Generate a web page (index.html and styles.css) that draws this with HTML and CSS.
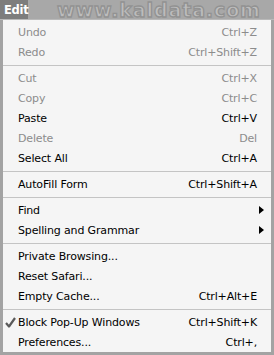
FILE: index.html
```html
<!DOCTYPE html>
<html lang="en">
<head>
    <meta charset="UTF-8">
    <title>Edit Menu</title>
    <link rel="stylesheet" href="styles.css">
</head>
<body>
    <!-- Menu bar -->
    <div class="menubar">
        <span class="tab">Edit</span>
        <span class="watermark">www.kaldata.com</span>
    </div>

    <!-- Dropdown -->
    <div class="menu">
        <div class="item disabled"><span>Undo</span><span>Ctrl+Z</span></div>
        <div class="item disabled"><span>Redo</span><span>Ctrl+Shift+Z</span></div>
        <div class="sep"></div>
        <div class="item disabled"><span>Cut</span><span>Ctrl+X</span></div>
        <div class="item disabled"><span>Copy</span><span>Ctrl+C</span></div>
        <div class="item"><span>Paste</span><span>Ctrl+V</span></div>
        <div class="item disabled"><span>Delete</span><span>Del</span></div>
        <div class="item"><span>Select All</span><span>Ctrl+A</span></div>
        <div class="sep"></div>
        <div class="item"><span>AutoFill Form</span><span>Ctrl+Shift+A</span></div>
        <div class="sep"></div>
        <div class="item"><span>Find</span><span class="arrow"></span></div>
        <div class="item"><span>Spelling and Grammar</span><span class="arrow"></span></div>
        <div class="sep"></div>
        <div class="item"><span>Private Browsing...</span></div>
        <div class="item"><span>Reset Safari...</span></div>
        <div class="item"><span>Empty Cache...</span><span>Ctrl+Alt+E</span></div>
        <div class="sep"></div>
        <div class="item">
            <svg class="check" width="11" height="11" viewBox="0 0 11 11">
                <path d="M1 6 L4 9.5 L10 1" fill="none" stroke="#5a5a5a" stroke-width="2.2" stroke-linejoin="round"/>
            </svg>
            <span>Block Pop-Up Windows</span><span>Ctrl+Shift+K</span>
        </div>
        <div class="item"><span>Preferences...</span><span>Ctrl+,</span></div>
    </div>
</body>
</html>
```

FILE: styles.css
```css
* {
    margin: 0;
    padding: 0;
    box-sizing: border-box;
}

body {
    background: #a3a3a3;
    height: 355px;
    overflow: hidden;
    font-family: 'DejaVu Sans', Verdana, sans-serif;
}

.menubar {
    height: 20px;
    background: #a8a8a8;
    display: flex;
    align-items: center;
    border-bottom: 1px solid #b9b9b9;
    overflow: hidden;
}

.tab {
    width: 28px;
    height: 20px;
    background: #7d7d7d;
    color: #fff;
    font-weight: bold;
    font-size: 11.5px;
    line-height: 20px;
    padding-left: 4px;
    letter-spacing: -0.3px;
    flex-shrink: 0;
}

.watermark {
    margin-left: 29px;
    font-family: 'DejaVu Sans', sans-serif;
    font-weight: bold;
    font-size: 19px;
    letter-spacing: 0.9px;
    color: #bdbdbd;
    -webkit-text-stroke: 1.3px #929292;
    line-height: 20px;
    white-space: nowrap;
}

.menu {
    margin: 0 3px 0 3px;
    background: #f5f5f5;
    padding-top: 2px;
    height: 332px;
}

.item {
    position: relative;
    height: 20px;
    display: flex;
    justify-content: space-between;
    align-items: center;
    padding: 0 14px 0 15px;
    font-size: 11px;
    letter-spacing: -0.15px;
    color: #000;
}

.item.disabled {
    color: #8c8c8c;
}

.sep {
    height: 6px;
    display: flex;
    align-items: center;
}

.sep::before {
    content: "";
    display: block;
    width: 100%;
    height: 1px;
    background: #c4c4c4;
}

.arrow {
    width: 0;
    height: 0;
    border-top: 4px solid transparent;
    border-bottom: 4px solid transparent;
    border-left: 5px solid #000;
    margin-right: -7px;
}

.check {
    position: absolute;
    left: 2px;
    top: 5px;
}
```
